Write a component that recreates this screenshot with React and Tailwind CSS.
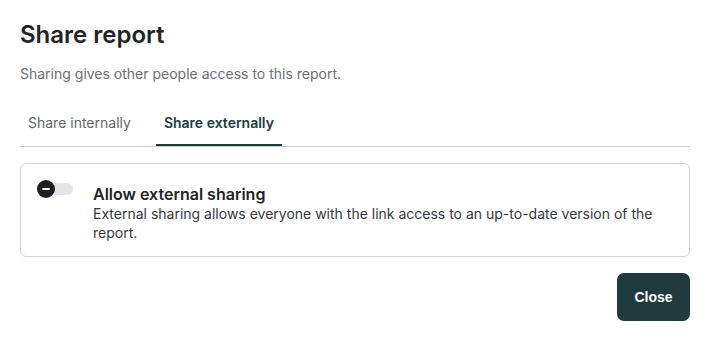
export default function App() {
  return (
    <div className="w-[708px] h-[338px] bg-white pl-5 pr-[18px] pt-[21px]" style={{ fontFamily: "Inter, 'Noto Sans', sans-serif" }}>
      <h1 className="text-[24px] leading-7 font-semibold text-[#222426]">Share report</h1>
      <p className="mt-[15px] text-[14px] leading-5 text-[#6b6f75]">Sharing gives other people access to this report.</p>
      <div className="mt-[29px] flex gap-[17px] border-b border-[#c9d0d8]">
        <button className="px-2 pb-[11px] text-[14px] leading-5 text-[#62666c] border-b-2 border-transparent">Share internally</button>
        <button className="px-2 pb-[11px] text-[14px] leading-5 font-semibold text-[#213a3d] border-b-2 border-[#213a3d]">Share externally</button>
      </div>
      <div className="mt-4 border border-[#cfd5dc] rounded-md pl-4 pr-4 pt-4 pb-[14px] flex gap-5">
        <div className="relative w-9 h-[18px] shrink-0">
          <div className="absolute left-0 right-0 top-[3px] h-3 rounded-full bg-[#e4e6e9]" />
          <div className="absolute left-0 top-0 w-[18px] h-[18px] rounded-full bg-[#1e1f21] flex items-center justify-center">
            <div className="w-2 h-[2px] bg-white rounded-full" />
          </div>
        </div>
        <div className="flex-1 pt-1">
          <div className="text-[16px] leading-5 font-semibold text-[#222426]">Allow external sharing</div>
          <div className="text-[14px] leading-[19px] text-[#36393d]">External sharing allows everyone with the link access to an up-to-date version of the report.</div>
        </div>
      </div>
      <div className="mt-4 flex justify-end">
        <button className="h-12 w-[73px] rounded-[7px] bg-[#213a3d] text-white text-[14px] font-bold" style={{ fontFamily: "'Liberation Sans', Arial, sans-serif" }}>Close</button>
      </div>
    </div>
  );
}
